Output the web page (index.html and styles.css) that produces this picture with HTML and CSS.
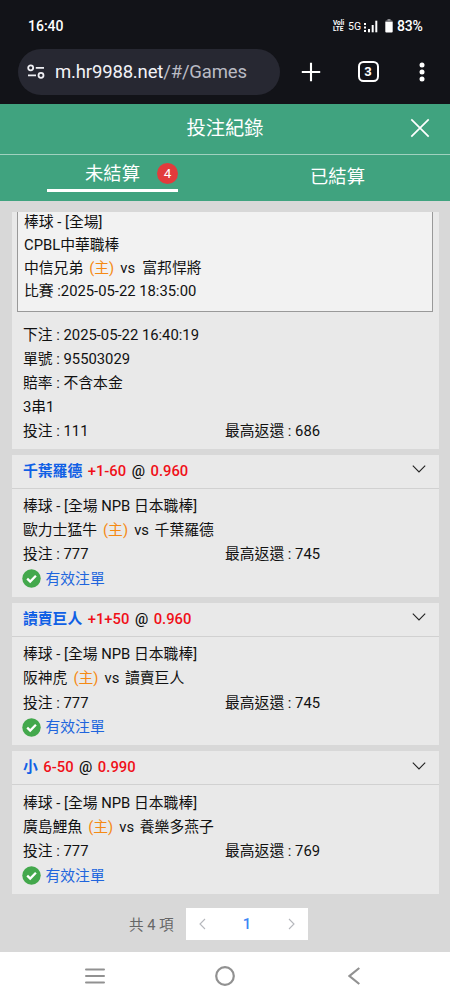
FILE: index.html
```html
<!DOCTYPE html>
<html lang="zh-Hant">
<head>
<meta charset="utf-8">
<meta name="viewport" content="width=device-width">
<title>投注紀錄</title>
<link rel="stylesheet" href="styles.css">
</head>
<body>
<div class="phone">
  <div class="status">
    <span class="clock">16:40</span>
    <div class="indicators">
      <div class="volte"><span>Voli</span><span>LTE</span></div>
      <span class="net">5G</span>
      <svg class="signal" width="14" height="13" viewBox="0 0 14 13" fill="#fff"><rect x="0" y="3" width="2" height="2"/><rect x="0" y="6.5" width="2" height="2"/><rect x="0" y="10" width="2" height="2"/><rect x="4" y="9" width="2" height="3.3"/><rect x="7.7" y="5" width="2" height="7.3"/><rect x="11.3" y="0.7" width="2" height="11.6"/></svg>
      <svg class="battery" width="8" height="14" viewBox="0 0 8 14"><path d="M2.5 0h3v1.5h1.2q1 0 1 1V3H.3v-.5q0-1 1-1h1.2z" fill="#85868a"/><path d="M.3 3h7.4v9.5q0 1-1 1H1.3q-1 0-1-1z" fill="#fff"/></svg>
      <span class="percent">83%</span>
    </div>
  </div>
  <div class="browser">
    <div class="address">
      <svg width="18" height="16" viewBox="0 0 18 16" fill="none" stroke="#f0f0f5" stroke-width="1.8"><circle cx="3.7" cy="3.8" r="2.5"/><path d="M8.8 3.8H17M1 11.3h8"/><circle cx="14" cy="11.3" r="2.5"/></svg>
      <span class="url">m.hr9988.net<span class="path">/#/Games</span></span>
    </div>
    <svg class="plus" width="20" height="20" viewBox="0 0 20 20" stroke="#fff" stroke-width="2.1"><path d="M10 .8v18.4M.8 10h18.4"/></svg>
    <div class="tabcount">3</div>
    <svg class="dots" width="6" height="20" viewBox="0 0 6 20" fill="#fff"><circle cx="3" cy="3" r="2.5"/><circle cx="3" cy="10" r="2.5"/><circle cx="3" cy="17" r="2.5"/></svg>
  </div>
  <header class="titlebar">
    <h1>投注紀錄</h1>
    <svg class="close" width="20" height="20" viewBox="0 0 20 20" stroke="#fff" stroke-width="1.7"><path d="M1.3 1.3l17.4 17.4M18.7 1.3L1.3 18.7"/></svg>
  </header>
  <nav class="tabs">
    <div class="tab active"><span>未結算</span><b class="badge">4</b></div>
    <div class="tab">已結算</div>
  </nav>
  <main class="records">
    <section class="card first">
      <div class="match">
        <p>棒球 - [全場]</p>
        <p>CPBL中華職棒</p>
        <p>中信兄弟 <span class="home">(主)</span> <span class="vs">vs</span> <span class="away">富邦悍將</span></p>
        <p>比賽 :2025-05-22 18:35:00</p>
      </div>
      <div class="body">
        <p>下注 : 2025-05-22 16:40:19</p>
        <p>單號 : 95503029</p>
        <p>賠率 : 不含本金</p>
        <p>3串1</p>
        <p class="split"><span>投注 : 111</span><span>最高返還 : 686</span></p>
      </div>
    </section>
    <section class="card">
      <div class="head"><span class="team">千葉羅德</span><span class="odds">+1-60</span><span>@</span><span class="odds">0.960</span>
        <svg class="chevron" width="14" height="8" viewBox="0 0 14 8" fill="none" stroke="#222" stroke-width="1.1"><path d="M.8.7L7 6.9 13.2.7"/></svg></div>
      <div class="body">
        <p>棒球 - [全場 NPB 日本職棒]</p>
        <p>歐力士猛牛 <span class="home">(主)</span> <span class="vs">vs</span> 千葉羅德</p>
        <p class="split"><span>投注 : 777</span><span>最高返還 : 745</span></p>
        <p class="valid"><svg width="19" height="19" viewBox="0 0 19 19"><circle cx="9.5" cy="9.5" r="9.2" fill="#43a84c"/><path d="M5.2 9.6l3 3 5.7-5.8" fill="none" stroke="#fff" stroke-width="2.3"/></svg>有效注單</p>
      </div>
    </section>
    <section class="card">
      <div class="head"><span class="team">讀賣巨人</span><span class="odds">+1+50</span><span>@</span><span class="odds">0.960</span>
        <svg class="chevron" width="14" height="8" viewBox="0 0 14 8" fill="none" stroke="#222" stroke-width="1.1"><path d="M.8.7L7 6.9 13.2.7"/></svg></div>
      <div class="body">
        <p>棒球 - [全場 NPB 日本職棒]</p>
        <p>阪神虎 <span class="home">(主)</span> <span class="vs">vs</span> 讀賣巨人</p>
        <p class="split"><span>投注 : 777</span><span>最高返還 : 745</span></p>
        <p class="valid"><svg width="19" height="19" viewBox="0 0 19 19"><circle cx="9.5" cy="9.5" r="9.2" fill="#43a84c"/><path d="M5.2 9.6l3 3 5.7-5.8" fill="none" stroke="#fff" stroke-width="2.3"/></svg>有效注單</p>
      </div>
    </section>
    <section class="card">
      <div class="head"><span class="team">小</span><span class="odds">6-50</span><span>@</span><span class="odds">0.990</span>
        <svg class="chevron" width="14" height="8" viewBox="0 0 14 8" fill="none" stroke="#222" stroke-width="1.1"><path d="M.8.7L7 6.9 13.2.7"/></svg></div>
      <div class="body">
        <p>棒球 - [全場 NPB 日本職棒]</p>
        <p>廣島鯉魚 <span class="home">(主)</span> <span class="vs">vs</span> 養樂多燕子</p>
        <p class="split"><span>投注 : 777</span><span>最高返還 : 769</span></p>
        <p class="valid"><svg width="19" height="19" viewBox="0 0 19 19"><circle cx="9.5" cy="9.5" r="9.2" fill="#43a84c"/><path d="M5.2 9.6l3 3 5.7-5.8" fill="none" stroke="#fff" stroke-width="2.3"/></svg>有效注單</p>
      </div>
    </section>
  </main>
  <div class="pagination">
    <span class="total">共 4 項</span>
    <div class="pager">
      <svg width="7" height="12" viewBox="0 0 7 12" fill="none" stroke="#b5b7bc" stroke-width="1.1"><path d="M6 1L1 6l5 5"/></svg>
      <span>1</span>
      <svg width="7" height="12" viewBox="0 0 7 12" fill="none" stroke="#b5b7bc" stroke-width="1.1"><path d="M1 1l5 5-5 5"/></svg>
    </div>
  </div>
  <div class="sysnav">
    <svg width="20" height="20" viewBox="0 0 20 20" stroke="#919191" stroke-width="2" stroke-linecap="round"><path d="M1 3.5h18M1 10h18M1 16.5h18"/></svg>
    <svg width="20" height="20" viewBox="0 0 20 20" fill="none" stroke="#919191" stroke-width="2.2"><circle cx="10" cy="10" r="8.8"/></svg>
    <svg class="back" width="12" height="20" viewBox="0 0 12 20" fill="none" stroke="#919191" stroke-width="2.2"><path d="M11.3 2L1.5 10l9.8 8"/></svg>
  </div>
</div>
</body>
</html>
```
FILE: styles.css
```css
* { box-sizing: border-box; }
body { margin: 0; background: #d8d8d8; color: #111; font: 14.8px Roboto, "Noto Sans CJK TC", sans-serif; }
p, h1 { margin: 0; }
svg { flex: none; display: block; }
.phone { width: 450px; height: 1000px; display: flex; flex-direction: column; overflow: hidden; }
.status { height: 48px; flex: none; padding: 4px 27px 0 28px; background: #121318; color: #fff; display: flex; align-items: center; justify-content: space-between; }
.clock { font-size: 14px; font-weight: 500; }
.indicators { display: flex; align-items: center; }
.volte { display: flex; flex-direction: column; width: 12px; font-size: 6.5px; line-height: 6px; font-weight: 700; }
.net { font-size: 10.5px; margin: 0 3px 0 3px; width: 13px; }
.signal { margin-right: 7px; }
.battery { margin-right: 4px; }
.percent { font-size: 14px; font-weight: 500; width: 26px; letter-spacing: -.2px; }
.browser { height: 56px; flex: none; background: #121318; display: flex; align-items: center; padding: 0 25px 9px 18px; color: #fff; }
.address { width: 262px; height: 46px; border-radius: 23px; background: #272832; display: flex; align-items: center; padding-left: 9px; gap: 10px; }
.url { font: 18.5px Roboto, sans-serif; letter-spacing: -.16px; color: #f2f2f7; white-space: nowrap; }
.path { color: #babbc4; }
.plus { margin-left: 21px; }
.tabcount { margin-left: 36.5px; width: 21px; height: 21px; border: 2px solid #fff; border-radius: 5.5px; font-size: 13px; line-height: 17px; font-weight: 700; text-align: center; }
.dots { margin-left: auto; }
.titlebar { height: 51px; background: #40a37f; border-bottom: 1px solid #a0d1bf; color: #fff; display: grid; grid-template-columns: 1fr auto 1fr; align-items: center; padding: 0 20px; flex: none; }
.titlebar h1 { grid-column: 2; font-size: 19.3px; font-weight: 400; line-height: 28px; }
.close { justify-self: end; margin-bottom: 2px; }
.tabs { height: 46px; flex: none; background: #40a37f; color: #fff; display: grid; grid-template-columns: 1fr 1fr; font-size: 18.3px; }
.tab { display: flex; justify-content: center; line-height: 44px; }
.tab.active { margin: 0 47px; height: 37px; width: 131px; border-bottom: 3px solid #fff; line-height: 38px; position: relative; }
.badge { position: absolute; right: 0; top: 8px; width: 21px; height: 21px; border-radius: 50%; background: #e23b3c; font-size: 13.5px; font-weight: 400; line-height: 21px; text-align: center; }
.records { padding: 11px 11px 0 12px; display: flex; flex-direction: column; gap: 6px; flex: none; }
.card { height: 142.4px; background: #e9e9e9; }
.card.first { height: 236.5px; }
.match { height: 100px; margin: 0 6px 0 5px; padding-left: 6px; background: #f2f2f2; border: solid #999; border-width: 0 1px 1px; }
.match p { line-height: 22.9px; height: 22.9px; white-space: nowrap; }
.match p:first-child { line-height: 20.9px; height: 21.9px; }
.body { padding: 5.5px 11px 0; }
.body p { height: 24.1px; line-height: 24.1px; white-space: nowrap; }
.first .body { padding-top: 12px; }
.first .body p { height: 23.95px; line-height: 23.95px; }
.home { color: #f58a14; margin: 0 2.4px; }
.vs { margin-right: 2px; }
.match .away { margin-left: 1.5px; }
.split { display: grid; grid-template-columns: 202px 1fr; }
.head { height: 34px; border-bottom: 1px solid #d1d1d1; padding: 0 13px 1px 11px; display: flex; align-items: center; gap: 5.5px; font-weight: 500; line-height: 20px; }
.team { color: #1060e5; font-weight: 700; }
.odds { color: #f01018; }
.chevron { margin-left: auto; margin-bottom: 3px; }
.body .valid { color: #2065dd; display: flex; align-items: center; gap: 4.5px; height: 25px; }
.valid svg { margin-left: -1px; }
.pagination { height: 58px; margin-top: auto; padding: 2px 0 0 129px; display: flex; align-items: center; flex: none; }
.total { width: 57px; padding-bottom: 2px; color: #666; font-size: 14.6px; white-space: nowrap; }
.pager { width: 122px; height: 32px; padding: 0 13px; background: #fff; display: flex; align-items: center; justify-content: space-between; color: #3e85f5; font-weight: 500; }
.sysnav { height: 48px; background: #fff; flex: none; display: flex; align-items: center; padding-left: 85px; gap: 110px; }
.back { margin-left: 3px; }
```
